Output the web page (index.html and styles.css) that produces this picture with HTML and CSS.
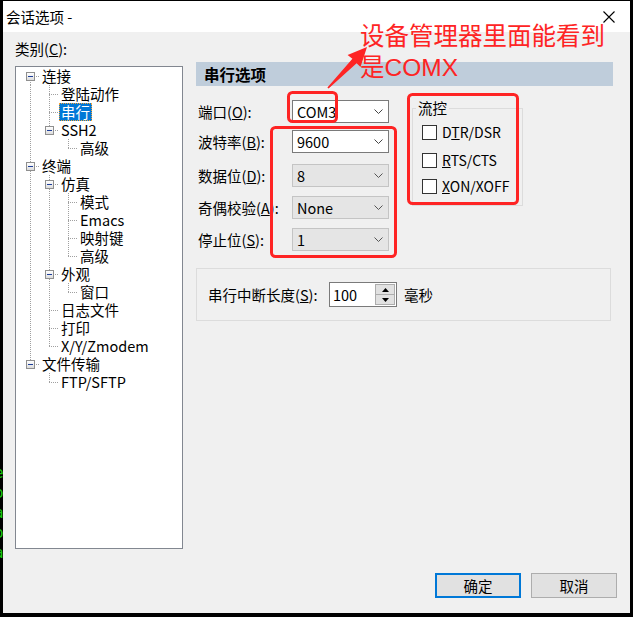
FILE: index.html
```html
<!DOCTYPE html>
<html lang="zh-CN">
<head>
<meta charset="utf-8">
<title>会话选项</title>
<link rel="stylesheet" href="styles.css">
</head>
<body>
<div class="term"><span>e</span><span>o</span><span>a</span><span>o</span><span>a</span></div>
<div class="window">
  <div class="titlebar">
    <span class="title">会话选项 -</span>
    <svg class="close" width="12" height="12" viewBox="0 0 12 12"><path d="M0.5 0.5 L11.5 11.5 M11.5 0.5 L0.5 11.5" stroke="#000" stroke-width="1.1" fill="none"/></svg>
  </div>
  <div class="content">
    <div class="left">
      <div class="cat">类别(<u>C</u>):</div>
      <div class="tree">
        <div class="row"><i class="g bxd"><b></b></i><span class="lbl">连接</span></div>
        <div class="row"><i class="g pipe"></i><i class="g tee"></i><span class="lbl">登陆动作</span></div>
        <div class="row"><i class="g pipe"></i><i class="g tee"></i><span class="lbl sel">串行</span></div>
        <div class="row"><i class="g pipe"></i><i class="g bxu"><b></b></i><span class="lbl">SSH2</span></div>
        <div class="row"><i class="g pipe"></i><i class="g"></i><i class="g elbow"></i><span class="lbl">高级</span></div>
        <div class="row"><i class="g bxud"><b></b></i><span class="lbl">终端</span></div>
        <div class="row"><i class="g pipe"></i><i class="g bxud"><b></b></i><span class="lbl">仿真</span></div>
        <div class="row"><i class="g pipe"></i><i class="g pipe"></i><i class="g tee"></i><span class="lbl">模式</span></div>
        <div class="row"><i class="g pipe"></i><i class="g pipe"></i><i class="g tee"></i><span class="lbl">Emacs</span></div>
        <div class="row"><i class="g pipe"></i><i class="g pipe"></i><i class="g tee"></i><span class="lbl">映射键</span></div>
        <div class="row"><i class="g pipe"></i><i class="g pipe"></i><i class="g elbow"></i><span class="lbl">高级</span></div>
        <div class="row"><i class="g pipe"></i><i class="g bxud"><b></b></i><span class="lbl">外观</span></div>
        <div class="row"><i class="g pipe"></i><i class="g pipe"></i><i class="g elbow"></i><span class="lbl">窗口</span></div>
        <div class="row"><i class="g pipe"></i><i class="g tee"></i><span class="lbl">日志文件</span></div>
        <div class="row"><i class="g pipe"></i><i class="g tee"></i><span class="lbl">打印</span></div>
        <div class="row"><i class="g pipe"></i><i class="g elbow"></i><span class="lbl">X/Y/Zmodem</span></div>
        <div class="row"><i class="g bxu"><b></b></i><span class="lbl">文件传输</span></div>
        <div class="row"><i class="g"></i><i class="g elbow"></i><span class="lbl">FTP/SFTP</span></div>
      </div>
    </div>
    <div class="right">
      <div class="header">串行选项</div>
      <div class="form">
        <div class="fields">
          <div class="field f1"><label>端口(<u>O</u>):</label><div class="combo"><span>COM3</span><svg width="9" height="5" viewBox="0 0 9 5"><path d="M0.5 0.5 L4.5 4.5 L8.5 0.5" fill="none" stroke="#444"/></svg></div></div>
          <div class="field f2"><label>波特率(<u>B</u>):</label><div class="combo"><span>9600</span><svg width="9" height="5" viewBox="0 0 9 5"><path d="M0.5 0.5 L4.5 4.5 L8.5 0.5" fill="none" stroke="#444"/></svg></div></div>
          <div class="field f3"><label>数据位(<u>D</u>):</label><div class="combo dis"><span>8</span><svg width="9" height="5" viewBox="0 0 9 5"><path d="M0.5 0.5 L4.5 4.5 L8.5 0.5" fill="none" stroke="#555"/></svg></div></div>
          <div class="field"><label>奇偶校验(<u>A</u>):</label><div class="combo dis"><span>None</span><svg width="9" height="5" viewBox="0 0 9 5"><path d="M0.5 0.5 L4.5 4.5 L8.5 0.5" fill="none" stroke="#555"/></svg></div></div>
          <div class="field"><label>停止位(<u>S</u>):</label><div class="combo dis"><span>1</span><svg width="9" height="5" viewBox="0 0 9 5"><path d="M0.5 0.5 L4.5 4.5 L8.5 0.5" fill="none" stroke="#555"/></svg></div></div>
        </div>
        <fieldset class="flow">
          <legend>流控</legend>
          <div class="check"><span class="box"></span><span>D<u>T</u>R/DSR</span></div>
          <div class="check c2"><span class="box"></span><span><u>R</u>TS/CTS</span></div>
          <div class="check c3"><span class="box"></span><span><u>X</u>ON/XOFF</span></div>
        </fieldset>
      </div>
      <div class="break">
        <span class="blabel">串行中断长度(<u>S</u>):</span>
        <div class="spin">
          <span class="val">100</span>
          <div class="btns">
            <span class="sb"><svg width="7" height="4" viewBox="0 0 7 4"><path d="M0 4 L3.5 0 L7 4Z" fill="#000"/></svg></span>
            <span class="sb"><svg width="7" height="4" viewBox="0 0 7 4"><path d="M0 0 L3.5 4 L7 0Z" fill="#000"/></svg></span>
          </div>
        </div>
        <span class="unit">毫秒</span>
      </div>
    </div>
  </div>
  <div class="footer">
    <button class="btn default">确定</button>
    <button class="btn">取消</button>
  </div>
  <div class="note">设备管理器里面能看到<br>是COMX</div>
  <svg class="marks" width="633" height="617" viewBox="0 0 633 617">
    <rect x="288.5" y="92.5" width="48" height="29" rx="4" fill="none" stroke="#fe2424" stroke-width="3"/>
    <rect x="271.5" y="127.5" width="124" height="129" rx="4" fill="none" stroke="#fe2424" stroke-width="3"/>
    <rect x="408.5" y="94.5" width="109" height="109" rx="4" fill="none" stroke="#fe2424" stroke-width="3"/>
    <polygon points="367,47 360.5,67 356.6,63.2 328.6,88.6 327.4,87.4 352.4,58.8 347.6,55" fill="#fe2424"/>
  </svg>
</div>
</body>
</html>
```
FILE: styles.css
```css
body {
  margin: 0;
  width: 633px;
  height: 617px;
  box-sizing: border-box;
  padding: 1px 3px 4px 0;
  background: #000;
  display: flex;
  overflow: hidden;
  font-family: "Noto Sans CJK SC", sans-serif;
  font-size: 14.5px;
  color: #000;
}

.term {
  width: 3px;
  flex: none;
  overflow: hidden;
  padding-top: 462px;
  color: #16c60c;
  font: 16px/20px "DejaVu Sans Mono", monospace;
}

.term span {
  display: block;
  margin-left: -6px;
}

.window {
  width: 627px;
  height: 612px;
  flex: none;
  background: #f0f0f0;
  display: flex;
  flex-direction: column;
  position: relative;
}

.titlebar {
  height: 31px;
  flex: none;
  background: #fff;
  display: flex;
  align-items: center;
  justify-content: space-between;
  padding: 0 15px 0 3px;
}

.title {
  line-height: 18px;
}

.content {
  flex: 1;
  display: flex;
  padding-left: 12px;
}

.left {
  width: 168px;
  flex: none;
}

.cat {
  margin-top: 8px;
  line-height: 18px;
}

.tree {
  margin-top: 8px;
  height: 483px;
  box-sizing: border-box;
  border: 1px solid #828790;
  background: #fff;
  padding-left: 5px;
}

.row {
  display: flex;
  height: 18px;
}

.g {
  --v: repeating-linear-gradient(to bottom, #a0a0a0 0 1px, transparent 1px 2px);
  --h: repeating-linear-gradient(to right, #a0a0a0 0 1px, transparent 1px 2px);
  width: 19px;
  height: 18px;
  flex: none;
  box-sizing: border-box;
  padding: 5px 0 0 5px;
  display: block;
}

.pipe {
  background: var(--v) 9px 0 / 1px 100% no-repeat;
}

.tee {
  background: var(--h) 9px 9px / 10px 1px no-repeat, var(--v) 9px 0 / 1px 100% no-repeat;
}

.elbow {
  background: var(--h) 9px 9px / 10px 1px no-repeat, var(--v) 9px 0 / 1px 9px no-repeat;
}

.bxd {
  background: var(--h) 9px 9px / 10px 1px no-repeat, var(--v) 9px 9px / 1px 9px no-repeat;
}

.bxu {
  background: var(--h) 9px 9px / 10px 1px no-repeat, var(--v) 9px 0 / 1px 9px no-repeat;
}

.bxud {
  background: var(--h) 9px 9px / 10px 1px no-repeat, var(--v) 9px 0 / 1px 100% no-repeat;
}

.g b {
  display: flex;
  align-items: center;
  justify-content: center;
  width: 9px;
  height: 9px;
  box-sizing: border-box;
  border: 1px solid #8f8f8f;
  background: linear-gradient(#ffffff, #dcdcdc);
}

.g b::before {
  content: "";
  width: 5px;
  height: 1px;
  background: #1e3f9a;
}

.lbl {
  height: 18px;
  line-height: 18px;
  padding: 0 2px;
  white-space: nowrap;
}

.lbl.sel {
  background: #0078d7;
  color: #fff;
  outline: 1px dotted #f3a33a;
  outline-offset: -1px;
}

.right {
  width: 417px;
  flex: none;
  margin-left: 13px;
}

.header {
  margin-top: 30px;
  height: 24px;
  line-height: 24px;
  padding-left: 8px;
  background: #bfcddb;
  font-weight: bold;
  font-size: 15.5px;
}

.form {
  display: flex;
  align-items: flex-start;
}

.fields {
  margin-top: 14px;
  width: 193px;
  flex: none;
}

.field {
  display: flex;
  align-items: center;
  height: 23px;
  margin-top: 9px;
}

.field.f1 {
  margin-top: 0;
}

.field.f2 {
  margin-top: 7px;
}

.field.f3 {
  margin-top: 11px;
}

.field label {
  width: 96px;
  flex: none;
  box-sizing: border-box;
  padding-left: 2px;
  white-space: nowrap;
  line-height: 18px;
}

.combo {
  width: 97px;
  height: 23px;
  box-sizing: border-box;
  border: 1px solid #7a7a7a;
  background: #fff;
  display: flex;
  align-items: center;
  justify-content: space-between;
  padding: 0 5px 0 4px;
  line-height: 18px;
}

.combo.dis {
  background: #e5e5e5;
  border-color: #c4c4c4;
}

.flow {
  margin: 13px 0 0 23px;
  width: 111px;
  box-sizing: border-box;
  border: 1px solid #dcdcdc;
  padding: 5px 0 9px 9px;
  min-width: 0;
}

.flow legend {
  padding: 0 2px;
  margin-left: -6px;
  line-height: 18px;
}

.check {
  display: flex;
  align-items: center;
  gap: 5px;
  height: 20px;
  line-height: 18px;
  white-space: nowrap;
  font-size: 14px;
}

.check.c2 {
  margin-top: 8px;
}

.check.c3 {
  margin-top: 6px;
}

.box {
  width: 15px;
  height: 15px;
  flex: none;
  box-sizing: border-box;
  border: 1px solid #333;
  background: #fff;
}

.break {
  margin-top: 17px;
  width: 415px;
  box-sizing: border-box;
  border: 1px solid #dcdcdc;
  padding: 13px 0 13px 11px;
  display: flex;
  align-items: center;
}

.blabel {
  width: 121px;
  flex: none;
  white-space: nowrap;
  line-height: 18px;
}

.spin {
  width: 68px;
  height: 25px;
  box-sizing: border-box;
  border: 1px solid #7a7a7a;
  background: #fff;
  display: flex;
  justify-content: space-between;
}

.spin .val {
  padding-left: 3px;
  line-height: 23px;
}

.btns {
  width: 21px;
  display: flex;
  flex-direction: column;
  padding: 1px 1px 1px 0;
  box-sizing: border-box;
}

.sb {
  flex: 1;
  background: #e1e1e1;
  border: 1px solid #adadad;
  display: flex;
  align-items: center;
  justify-content: center;
}

.sb + .sb {
  border-top: none;
}

.unit {
  margin-left: 7px;
  line-height: 18px;
}

.footer {
  height: 40px;
  flex: none;
  box-sizing: border-box;
  padding: 0 13px 15px 0;
  display: flex;
  justify-content: flex-end;
  gap: 10px;
}

.btn {
  width: 86px;
  height: 25px;
  box-sizing: border-box;
  border: 1px solid #adadad;
  background: #e1e1e1;
  font-family: "Noto Sans CJK SC", sans-serif;
  font-size: 14.5px;
  color: #000;
  padding: 0;
  line-height: 18px;
}

.btn.default {
  border: 2px solid #0078d7;
}

.note {
  position: absolute;
  left: 357px;
  top: 20px;
  font-family: "Liberation Sans", "Noto Sans CJK SC", sans-serif;
  font-size: 24.5px;
  line-height: 31px;
  color: #fe2424;
  white-space: nowrap;
}

.marks {
  position: absolute;
  left: -3px;
  top: -1px;
  pointer-events: none;
}
```
